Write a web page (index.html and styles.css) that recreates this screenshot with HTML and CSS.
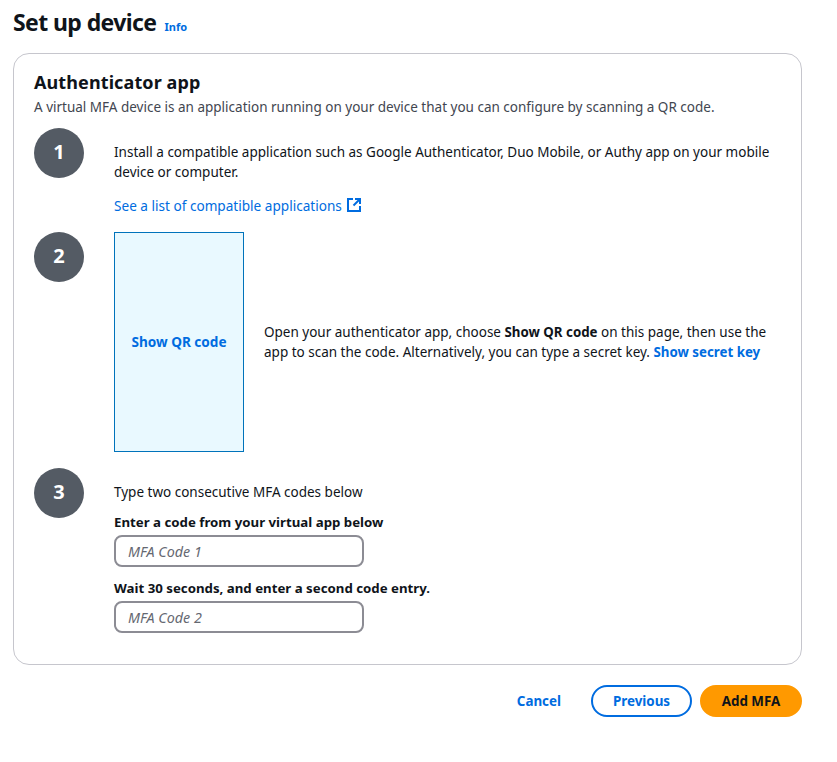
FILE: index.html
```html
<!DOCTYPE html>
<html lang="en">
<head>
<meta charset="UTF-8">
<meta name="viewport" content="width=device-width, initial-scale=1.0">
<title>Set up device</title>
<link rel="stylesheet" href="styles.css">
</head>
<body>
<div class="page">
    <div class="page-head">
        <h1>Set up device</h1>
        <a class="info" href="#">Info</a>
    </div>

    <div class="card">
        <h2>Authenticator app</h2>
        <p class="lead">A virtual MFA device is an application running on your device that you can configure by scanning a QR code.</p>

        <div class="step step-one">
            <div class="num">1</div>
            <div class="step-body">
                <p class="install">Install a compatible application such as Google Authenticator, Duo Mobile, or Authy app on your mobile device or computer.</p>
                <a class="link" href="#">See a list of compatible applications
                    <svg class="ext" width="16" height="16" viewBox="0 0 16 16" fill="none" stroke="currentColor" stroke-width="2">
                        <path d="M7 2H2v12h12V9"/>
                        <path d="M9 2h5v5"/>
                        <path d="M14 2L7.5 8.5"/>
                    </svg>
                </a>
            </div>
        </div>

        <div class="step step-two">
            <div class="num">2</div>
            <div class="qr-row">
                <div class="qr-box"><a href="#">Show QR code</a></div>
                <p class="qr-text">Open your authenticator app, choose <b>Show QR code</b> on this page, then use the app to scan the code. Alternatively, you can type a secret key. <a href="#">Show secret key</a></p>
            </div>
        </div>

        <div class="step step-three">
            <div class="num">3</div>
            <div class="step-body">
                <p class="type-two">Type two consecutive MFA codes below</p>
                <label class="field">
                    <span>Enter a code from your virtual app below</span>
                    <input type="text" placeholder="MFA Code 1">
                </label>
                <label class="field">
                    <span>Wait 30 seconds, and enter a second code entry.</span>
                    <input type="text" placeholder="MFA Code 2">
                </label>
            </div>
        </div>
    </div>

    <div class="actions">
        <a class="cancel" href="#">Cancel</a>
        <button class="btn btn-normal">Previous</button>
        <button class="btn btn-primary">Add MFA</button>
    </div>
</div>
</body>
</html>
```

FILE: styles.css
```css
/* Page */
body {
    margin: 0;
    background-color: #fff;
    color: #0f141a;
    font-family: "Noto Sans", "Open Sans", sans-serif;
    font-size: 13.5px;
    line-height: 20px;
}

a {
    color: #006ce0;
    text-decoration: none;
}

p {
    margin: 0;
}

.page {
    width: 789px;
    padding: 6px 0 0 13px;
}

.page-head {
    display: flex;
    align-items: baseline;
    gap: 8px;
    height: 47px;
}

h1 {
    margin: 0;
    font-size: 23px;
    letter-spacing: -0.6px;
    line-height: 32px;
    font-weight: 700;
}

.info {
    font-size: 11px;
    font-weight: 700;
}

/* Card */
.card {
    box-sizing: border-box;
    height: 612px;
    padding: 16px 20px;
    border: 1px solid #c6c6cd;
    border-radius: 16px;
}

h2 {
    margin: 0 0 3px;
    font-size: 18px;
    letter-spacing: 0.1px;
    line-height: 24px;
    font-weight: 700;
}

.lead {
    color: #424650;
}

.step {
    display: flex;
    gap: 30px;
}

.num {
    flex: none;
    width: 50px;
    height: 50px;
    border-radius: 50%;
    background-color: #545b64;
    color: #fff;
    font-size: 20px;
    font-weight: 700;
    line-height: 48px;
    text-align: center;
}

.step-one {
    margin-top: 11px;
}

.install {
    margin: 14px 0 14px;
}

.link {
    font-size: 13.6px;
}

.ext {
    vertical-align: -2px;
    margin-left: 1px;
}

.step-two {
    margin-top: 16px;
}

.step-body {
    flex: 1;
}

.qr-row {
    flex: 1;
    display: flex;
    align-items: center;
    gap: 20px;
}

.qr-box {
    flex: none;
    box-sizing: border-box;
    width: 130px;
    height: 220px;
    display: flex;
    align-items: center;
    justify-content: center;
    background-color: #e9f9ff;
    border: 1px solid #0073bb;
    font-size: 13.6px;
    font-weight: 700;
}

.qr-text b,
.qr-text a {
    font-size: 13.3px;
    font-weight: 700;
}

.step-three {
    margin-top: 16px;
}

.type-two {
    margin: 14px 0 10px;
}

.field {
    display: block;
    margin-bottom: 11px;
}

.field span {
    display: block;
    margin-bottom: 3px;
    font-size: 13.25px;
    font-weight: 700;
}

.field input {
    display: block;
    box-sizing: border-box;
    width: 250px;
    height: 32px;
    padding: 0 12px;
    border: 2px solid #8c8c94;
    border-radius: 8px;
    font-family: inherit;
    font-size: 14.3px;
}

.field input::placeholder {
    color: #656871;
    font-style: italic;
}

/* Buttons */
.actions {
    display: flex;
    align-items: center;
    justify-content: flex-end;
    gap: 8px;
    margin-top: 20px;
}

.cancel {
    margin-right: 22px;
    font-size: 13.4px;
    font-weight: 700;
}

.btn {
    box-sizing: border-box;
    height: 32px;
    border-radius: 20px;
    border: 2px solid #006ce0;
    font-family: inherit;
    font-size: 13.4px;
    font-weight: 700;
    cursor: pointer;
}

.btn-normal {
    width: 101px;
    background-color: #fff;
    color: #006ce0;
}

.btn-primary {
    width: 102px;
    background-color: #ff9900;
    border-color: #ff9900;
    color: #0f141a;
}
```
